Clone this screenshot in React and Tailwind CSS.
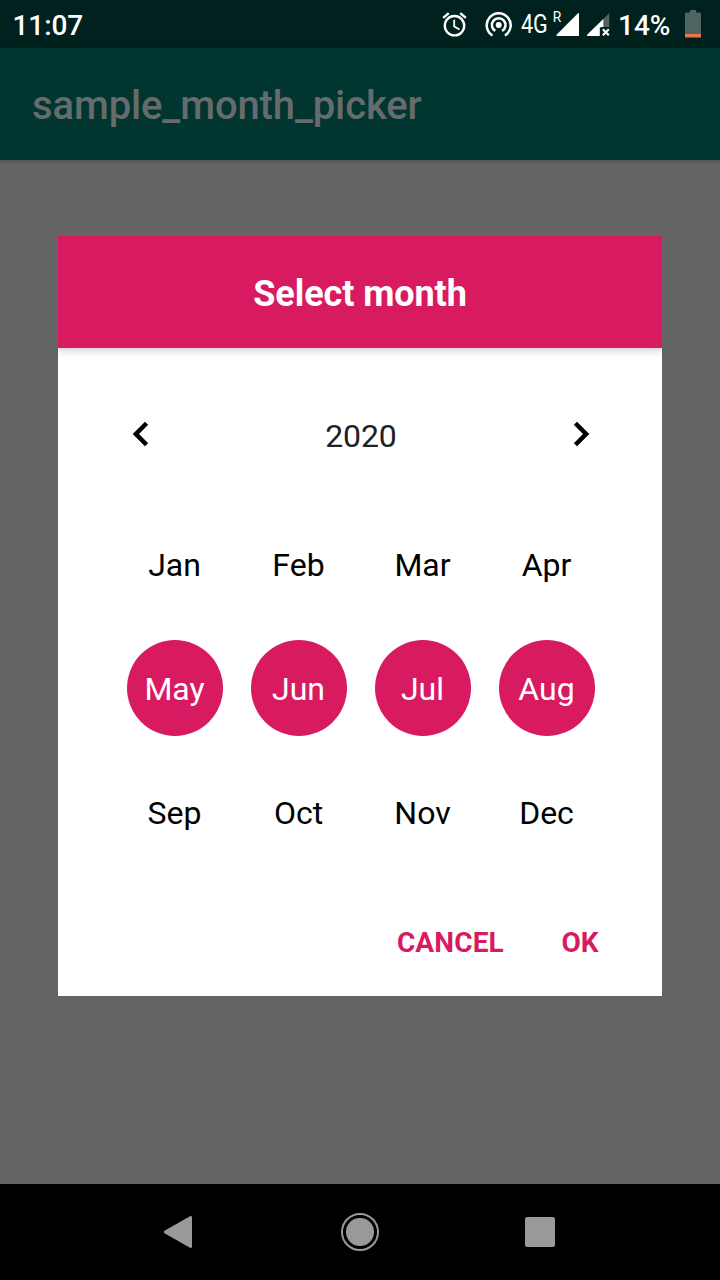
const months = ['Jan', 'Feb', 'Mar', 'Apr', 'May', 'Jun', 'Jul', 'Aug', 'Sep', 'Oct', 'Nov', 'Dec'];
const selected = ['May', 'Jun', 'Jul', 'Aug'];

function StatusBar() {
  return (
    <div className="flex h-12 items-center justify-between bg-[#00211d] pl-[12.5px] pr-[19px] text-white">
      <span className="pt-[3px] text-[28px] leading-8 font-medium tracking-[-0.1px]">11:07</span>
      <div className="flex h-12 items-center">
        <svg className="h-[29px] w-[29px]" viewBox="0 0 24 24" fill="currentColor" aria-label="Alarm">
          <path d="m22 5.72-4.6-3.86-1.29 1.53 4.6 3.86zM7.88 3.39 6.6 1.86 2 5.71l1.29 1.53zM12.5 8H11v6l4.75 2.85.75-1.23-4-2.37zM12 4c-4.97 0-9 4.03-9 9s4.02 9 9 9a9 9 0 0 0 0-18m0 16c-3.87 0-7-3.13-7-7s3.13-7 7-7 7 3.13 7 7-3.13 7-7 7" />
        </svg>
        <svg className="ml-[14px] h-[32px] w-[32px]" viewBox="0 0 32 32" fill="none" stroke="currentColor" strokeWidth="2.5" aria-label="Hotspot">
          <circle cx="15.7" cy="17" r="3" fill="currentColor" stroke="none" />
          <path d="M12.3 22.9a6.8 6.8 0 1 1 6.8 0" />
          <path d="M9.5 27.5a12 12 0 1 1 12.4 0" />
        </svg>
        <span className="ml-[6px] w-[27px] pt-[2px] text-[25px] leading-8">
          <span className="inline-block origin-left scale-x-[0.86]">4G</span>
        </span>
        <svg className="ml-1 h-12 w-[28px]" viewBox="0 0 28 48" aria-label="Signal, roaming">
          <text x="0.7" y="21.5" fontSize="15" fill="#fff" textLength="8.5" lengthAdjust="spacingAndGlyphs">R</text>
          <path d="M27 13v23H5q-1.2-.5-.2-1.6L26 13.2z" fill="#fff" />
        </svg>
        <svg className="ml-[6px] h-12 w-[25px]" viewBox="0 0 25 48" aria-label="No signal">
          <path d="M23.3 13v14H14v-4.700z" fill="#4f6461" />
          <path d="M17.3 19v8.500h-3.500V36H1.500q-1.200-.5-.2-1.600z" fill="#fff" />
          <path d="M15 27h9v9h-9z" fill="#00211d" />
          <path d="m16.800 29.300 6 6m0-6-6 6" stroke="#fff" strokeWidth="2.200" />
        </svg>
        <span className="ml-[7px] w-[53px] pt-[3px] text-[28px] leading-8 font-medium">14%</span>
        <svg className="ml-[14px] h-12 w-4" viewBox="0 0 16 48" aria-label="Battery">
          <path d="M5 10h6v2.5h4.2q.8 0 .8.8V34H0V13.300q0-.8.8-.8H5z" fill="#4f6461" />
          <path d="M0 34h16v2.700q0 .8-.8.8H.8q-.8 0-.8-.8z" fill="#f4704a" />
        </svg>
      </div>
    </div>
  );
}

function Chevron({ left }) {
  return (
    <svg className="h-12 w-12" viewBox="0 0 24 24" fill="currentColor" stroke="currentColor" strokeWidth="0.3" strokeLinejoin="round">
      {left ? (
        <path d="M15.41 7.41 14 6l-6 6 6 6 1.410-1.410L10.830 12z" />
      ) : (
        <path d="M10 6 8.590 7.410 13.170 12l-4.580 4.590L10 18l6-6z" />
      )}
    </svg>
  );
}

function MonthDialog() {
  return (
    <section className="flex h-[760px] w-[604px] flex-col overflow-hidden bg-white text-black">
      <header className="flex h-28 shrink-0 items-center justify-center bg-[#d81b60] pt-1 text-[36px] font-bold tracking-[-0.08px] text-white shadow-[0_2px_8px_rgba(0,0,0,0.22)]">
        Select month
      </header>
      <div className="mt-[62px] flex h-12 items-center justify-between pr-[57px] pl-[59px]">
        <button aria-label="Previous year"><Chevron left /></button>
        <span className="pt-1 text-[32px] tracking-[-0.1px] text-[#212121]">2020</span>
        <button aria-label="Next year"><Chevron /></button>
      </div>
      <div className="mt-11 ml-[54.5px] grid w-[496px] grid-cols-4">
        {months.map((m) => (
          <div key={m} className="flex h-[124px] items-center justify-center">
            <button
              className={
                selected.includes(m)
                  ? 'h-24 w-24 rounded-full bg-[#d81b60] pt-0.5 text-[32px] text-white'
                  : 'h-24 w-24 rounded-full pt-0.5 text-[32px]'
              }
            >
              {m}
            </button>
          </div>
        ))}
      </div>
      <div className="mt-[49px] flex h-10 items-center justify-end gap-[57.5px] pr-[63.5px] text-[28px] font-bold text-[#d81b60]">
        <button className="tracking-[0.15px]">CANCEL</button>
        <button>OK</button>
      </div>
    </section>
  );
}

export default function App() {
  return (
    <div className="flex h-[1280px] w-[720px] flex-col overflow-hidden bg-[#646464] font-[Roboto,sans-serif]">
      <StatusBar />
      <div className="flex h-28 items-center bg-[#003530] px-8 pt-1 text-[40px] font-medium tracking-[-0.12px] text-[#666b6b] shadow-[0_1px_4px_rgba(0,0,0,0.25)]">
        sample_month_picker
      </div>
      <main className="flex flex-1 justify-center pt-[76px]">
        <MonthDialog />
      </main>
      <nav className="flex h-24 items-center justify-center gap-[132px] bg-black text-[#999]">
        <svg className="h-12 w-12" viewBox="0 0 48 48" fill="currentColor" aria-label="Back">
          <path d="M36 9.5v29q0 2-2 1.200L8.900 25.500q-2-1.500 0-3L34 8.300q2-.8 2 1.200" />
        </svg>
        <svg className="h-12 w-12" viewBox="0 0 48 48" aria-label="Home">
          <circle cx="24" cy="24" r="14" fill="currentColor" />
          <circle cx="24" cy="24" r="18" fill="none" stroke="currentColor" strokeWidth="2" />
        </svg>
        <svg className="h-12 w-12" viewBox="0 0 48 48" aria-label="Recents">
          <rect x="9" y="9" width="30" height="30" rx="2.5" fill="currentColor" />
        </svg>
      </nav>
    </div>
  );
}
